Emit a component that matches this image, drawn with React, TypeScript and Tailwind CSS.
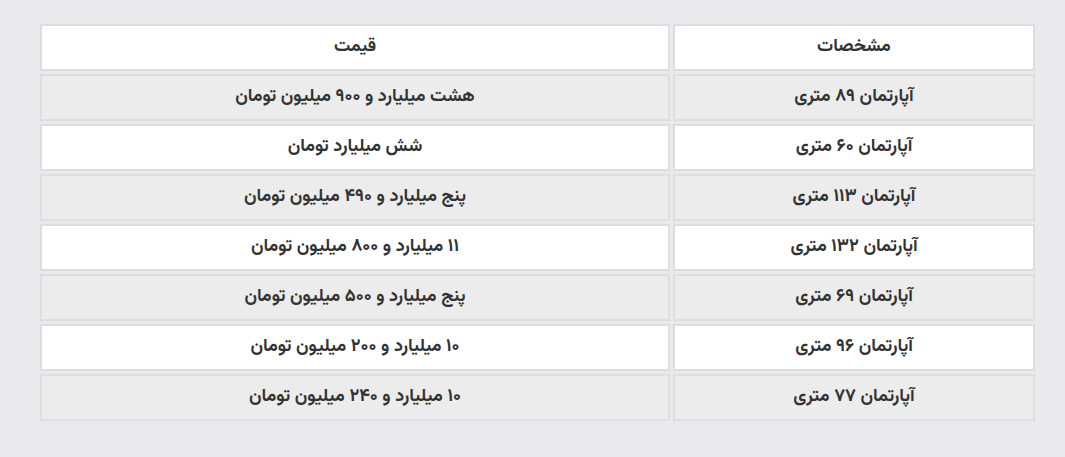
import React from "react";

const rows: [string, string][] = [
  ["آپارتمان ۸۹ متری", "هشت میلیارد و ۹۰۰ میلیون تومان"],
  ["آپارتمان ۶۰ متری", "شش میلیارد تومان"],
  ["آپارتمان ۱۱۳ متری", "پنج میلیارد و ۴۹۰ میلیون تومان"],
  ["آپارتمان ۱۳۲ متری", "۱۱ میلیارد و ۸۰۰ میلیون تومان"],
  ["آپارتمان ۶۹ متری", "پنج میلیارد و ۵۰۰ میلیون تومان"],
  ["آپارتمان ۹۶ متری", "۱۰ میلیارد و ۲۰۰ میلیون تومان"],
  ["آپارتمان ۷۷ متری", "۱۰ میلیارد و ۲۴۰ میلیون تومان"],
];

export default function App() {
  return (
    <div
      className="w-[1065px] h-[457px] bg-[#e9eaee] pt-[21px] pl-[37px]"
      style={{ fontFamily: '"Vazirmatn", "DejaVu Sans", sans-serif' }}
    >
      <table dir="rtl" className="border-separate border-spacing-[3px] text-[18px] font-bold text-[#333333]">
        <thead>
          <tr>
            <th className="w-[362px] h-[47px] bg-white border-2 border-[#dedede] text-center font-bold p-0">مشخصات</th>
            <th className="w-[630px] h-[47px] bg-white border-2 border-[#dedede] text-center font-bold p-0">قیمت</th>
          </tr>
        </thead>
        <tbody>
          {rows.map(([a, b], i) => {
            const bg = i % 2 === 0 ? "bg-[#ececec]" : "bg-white";
            return (
              <tr key={i}>
                <td className={`h-[47px] ${bg} border-2 border-[#dedede] text-center p-0`}>{a}</td>
                <td className={`h-[47px] ${bg} border-2 border-[#dedede] text-center p-0`}>{b}</td>
              </tr>
            );
          })}
        </tbody>
      </table>
    </div>
  );
}
